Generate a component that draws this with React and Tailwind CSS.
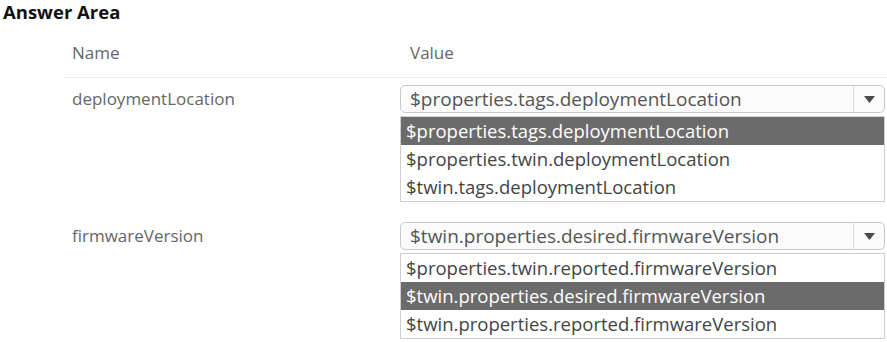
const rows = [
  {
    name: "deploymentLocation",
    value: "$properties.tags.deploymentLocation",
    options: [
      "$properties.tags.deploymentLocation",
      "$properties.twin.deploymentLocation",
      "$twin.tags.deploymentLocation",
    ],
    selected: 0,
  },
  {
    name: "firmwareVersion",
    value: "$twin.properties.desired.firmwareVersion",
    options: [
      "$properties.twin.reported.firmwareVersion",
      "$twin.properties.desired.firmwareVersion",
      "$twin.properties.reported.firmwareVersion",
    ],
    selected: 1,
  },
];

function Select({ value, options, selected }) {
  return (
    <div className="w-[485px]">
      <div className="flex h-[28px] items-center rounded-[5px] border border-[#c9c9c9] bg-[#fbfbfb]">
        <span className="flex-1 pl-[9px] text-[19px] leading-none text-[#555]">{value}</span>
        <span className="flex h-full w-[31px] items-center justify-center border-l border-[#dcdcdc]">
          <svg width="11" height="7" viewBox="0 0 11 7">
            <path d="M0 0 H11 L5.5 7 Z" fill="#4a4a4a" />
          </svg>
        </span>
      </div>
      <div className="mt-[3px] border border-[#cfcfcf] bg-white">
        {options.map((opt, i) => (
          <div
            key={opt}
            className={
              i === selected
                ? "flex h-[28px] items-center bg-[#6b6b6b] pl-[5px] text-[18.5px] leading-none text-white"
                : "flex h-[28px] items-center pl-[5px] text-[18.5px] leading-none text-[#444]"
            }
          >
            {opt}
          </div>
        ))}
      </div>
    </div>
  );
}

export default function App() {
  return (
    <div className="h-[342px] w-[887px] overflow-hidden bg-white font-['Open_Sans','Noto_Sans',sans-serif]">
      <div className="pl-[3px] text-[18.5px] font-bold leading-[24px] text-[#111]">Answer Area</div>
      <div className="ml-[65px] mt-[17px]">
        <div className="flex border-b border-[#ececec] pb-[12px] text-[17px] leading-[24px] text-[#666]">
          <span className="w-[333px] pl-[7px]">Name</span>
          <span className="pl-[12px]">Value</span>
        </div>
        {rows.map((r, i) => (
          <div key={r.name} className={i === 0 ? "mt-[7px] flex" : "mt-[20px] flex"}>
            <span className="w-[335px] pl-[7px] pt-[2px] text-[17px] leading-[24px] text-[#666]">{r.name}</span>
            <Select value={r.value} options={r.options} selected={r.selected} />
          </div>
        ))}
      </div>
    </div>
  );
}
